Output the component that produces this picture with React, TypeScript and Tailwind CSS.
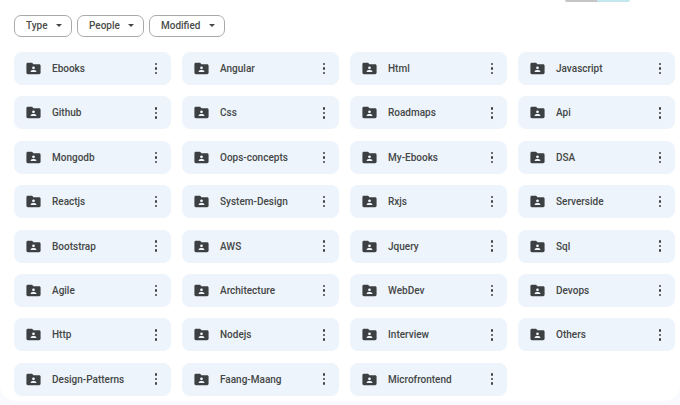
const rows = [
  ["Ebooks", "Angular", "Html", "Javascript"],
  ["Github", "Css", "Roadmaps", "Api"],
  ["Mongodb", "Oops-concepts", "My-Ebooks", "DSA"],
  ["Reactjs", "System-Design", "Rxjs", "Serverside"],
  ["Bootstrap", "AWS", "Jquery", "Sql"],
  ["Agile", "Architecture", "WebDev", "Devops"],
  ["Http", "Nodejs", "Interview", "Others"],
  ["Design-Patterns", "Faang-Maang", "Microfrontend"],
];

function SharedFolder() {
  return (
    <svg width="17" height="17" viewBox="0 0 24 24" className="shrink-0" fill="#3c4043">
      <path d="M10 4H4c-1.1 0-2 .9-2 2v12c0 1.1.9 2 2 2h16c1.1 0 2-.9 2-2V8c0-1.1-.9-2-2-2h-8l-2-2zm2 5c1.1 0 2 .9 2 2s-.9 2-2 2-2-.9-2-2 .9-2 2-2zm4 8H8v-1c0-1.33 2.67-2 4-2s4 .67 4 2v1z" />
    </svg>
  );
}

function Dots() {
  return (
    <div className="flex flex-col gap-[2px]">
      <span className="w-[2.5px] h-[2.5px] rounded-full bg-[#3c4043]" />
      <span className="w-[2.5px] h-[2.5px] rounded-full bg-[#3c4043]" />
      <span className="w-[2.5px] h-[2.5px] rounded-full bg-[#3c4043]" />
    </div>
  );
}

function Chip({ label, w }: { label: string; w: string }) {
  return (
    <div className={`${w} h-[22px] flex items-center justify-between pl-[11px] pr-[9px] pb-[1px] rounded-[7px] border border-[#a8aaa8] text-[10px] font-medium text-[#4a4d4a]`}>
      <span>{label}</span>
      <span className="w-0 h-0 border-x-[3px] border-x-transparent border-t-[3px] border-t-[#444746]" />
    </div>
  );
}

export default function App() {
  return (
    <div className="w-[680px] h-[405px] overflow-hidden bg-[#f8fafd] font-['Roboto','Liberation_Sans',sans-serif]">
      <div className="h-[401px] bg-white rounded-b-[16px]">
        <div className="h-[15px] flex justify-end pr-[50px]">
          <div className="w-[65px] h-[2px] flex rounded-b-[2px] overflow-hidden">
            <div className="w-[32px] bg-[#c4c6c4]" />
            <div className="flex-1 bg-[#c2e7ee]" />
          </div>
        </div>
        <div className="flex gap-[5px] pl-[14px]">
          <Chip label="Type" w="w-[58px]" />
          <Chip label="People" w="w-[67px]" />
          <Chip label="Modified" w="w-[76px]" />
        </div>
        <div className="grid grid-cols-[repeat(4,157px)] gap-x-[11px] gap-y-[11.4px] pl-[14px] pt-[15px]">
          {rows.flat().map((name) => (
            <div key={name} className="h-[33px] rounded-[8px] bg-[#eef4fb] flex items-center pl-[11px] pr-[14px]">
              <SharedFolder />
              <span className="ml-[10px] flex-1 text-[10px] text-[#444746] font-medium">{name}</span>
              <Dots />
            </div>
          ))}
        </div>
      </div>
    </div>
  );
}
